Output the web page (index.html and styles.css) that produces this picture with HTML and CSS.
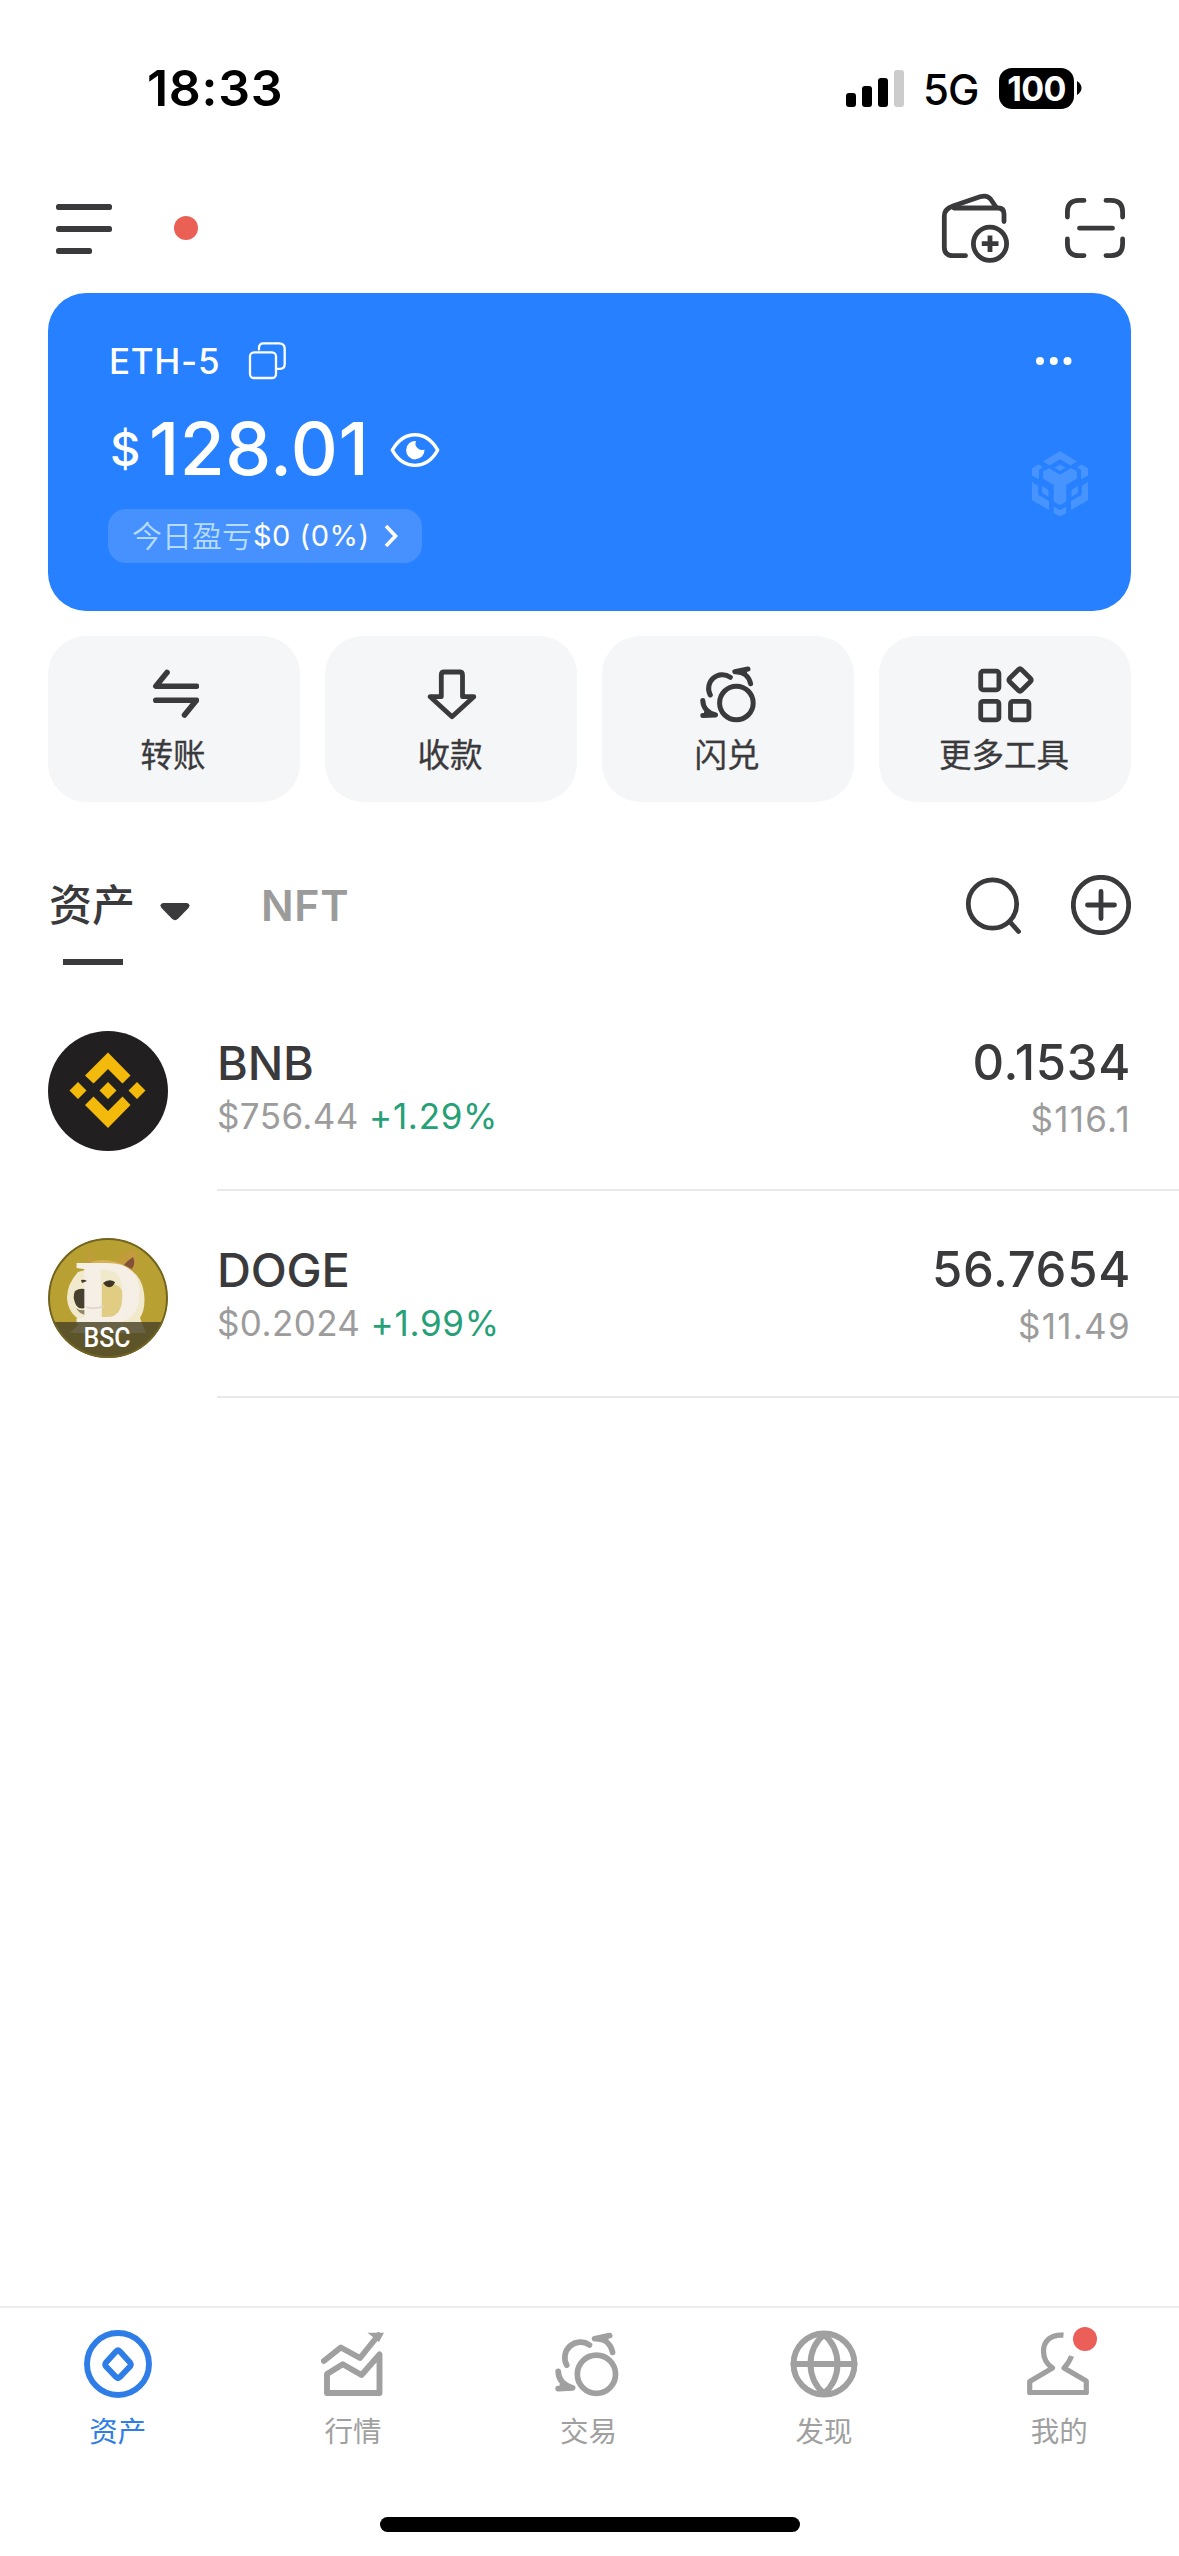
FILE: index.html
```html
<!DOCTYPE html>
<html lang="zh-CN">
<head>
<meta charset="utf-8">
<title>钱包</title>
<link rel="stylesheet" href="styles.css">
</head>
<body>
<svg class="sprite" width="0" height="0" aria-hidden="true">
  <symbol id="swap" viewBox="0 0 58 58">
    <g fill="none" stroke="currentColor" stroke-width="5" stroke-linecap="round" stroke-linejoin="round">
      <circle cx="36.4" cy="38" r="16.8"/>
      <path d="M30.3 12.3A13.7 13.7 0 0 0 10.3 30"/>
      <path d="M48 4 34.8 6.8C43 6.500 49 11 50.600 18.800"/>
      <path d="M2.800 35.500C3 42 7 47.500 15.500 50L2.800 50.600"/>
      <path d="M42 7.500 46 5.500V9zM5 47V49.500H9z" stroke-width="2"/>
    </g>
  </symbol>
</svg>
<div class="app">
  <header class="status">
    <span class="time">18:33</span>
    <div class="status-right">
      <svg class="signal" width="58" height="37" viewBox="0 0 58 37">
        <rect x="0" y="23" width="10" height="14" rx="3"/>
        <rect x="16" y="16" width="10" height="21" rx="3"/>
        <rect x="32" y="8" width="10" height="29" rx="3"/>
        <rect x="48" y="0" width="10" height="37" rx="3" fill="#ccc"/>
      </svg>
      <span class="net">5G</span>
      <span class="battery">100</span>
      <svg width="5" height="14" viewBox="0 0 5 14"><path d="M0 0Q4.500 3 4.500 7T0 14z"/></svg>
    </div>
  </header>

  <div class="topbar">
    <svg width="56" height="50" viewBox="0 0 56 50" class="menu">
      <rect width="56" height="6" rx="2.500"/><rect y="22" width="56" height="6" rx="2.500"/><rect y="44" width="36" height="6" rx="2.500"/>
    </svg>
    <span class="dot"></span>
    <svg class="line wallet" width="72" height="72" viewBox="0 0 72 72">
      <path d="M25.500 63.700H13Q4.300 63.700 4.300 55V24Q4.300 17 13 14L40 4.800Q47 2.600 50.500 7L56 15"/>
      <path d="M14 16H58Q64 16 64 22V29.500"/>
      <circle cx="50" cy="51.700" r="16.600"/>
      <path d="M50 43.500V60M41.800 51.700H58.500" stroke-linecap="butt"/>
    </svg>
    <svg class="line scan" width="60" height="60" viewBox="0 0 60 60">
      <path d="M2.400 19V14Q2.400 2.400 14 2.400H19M41 2.400H46Q57.600 2.400 57.600 14V19M57.600 41V46Q57.600 57.600 46 57.600H41M19 57.600H14Q2.400 57.600 2.400 46V41M14.500 30.200H47.500"/>
    </svg>
  </div>

  <section class="card">
    <div class="card-main">
      <div class="account">
        <span>ETH-5</span>
        <svg width="40" height="40" viewBox="0 0 40 40" fill="none" stroke="#fff" stroke-width="2.300" stroke-linecap="round">
          <rect x="2" y="11.300" width="26" height="25.700" rx="4"/>
          <path d="M11 8.500V7Q11 2.400 15.500 2.400H31Q36.700 2.400 36.700 8V23Q36.700 27.800 32 27.800H29.500"/>
        </svg>
      </div>
      <div class="balance">
        <span class="currency">$</span><span class="amount">128.01</span>
        <svg width="50" height="36" viewBox="0 0 50 36">
          <path d="M2.300 18.200C7 10 15 2.800 25 2.800S43 10 47.700 18.200C43 26.500 35 33.400 25 33.400S7 26.500 2.300 18.200Z" fill="none" stroke="#fff" stroke-width="3.400" stroke-linejoin="round"/>
          <path d="M26 9A9.200 9.200 0 1 0 34.500 17.500A6.500 6.500 0 0 1 26 9Z" fill="#fff"/>
        </svg>
      </div>
      <div class="pnl">
        <span class="pnl-label">今日盈亏</span><span class="pnl-value">$0 (0%)</span>
        <svg width="14" height="24" viewBox="0 0 14 24"><path d="M2 2 11.500 12 2 22" fill="none" stroke="#fff" stroke-width="3.600"/></svg>
      </div>
    </div>
    <div class="card-side">
      <svg class="more" width="36" height="8" viewBox="0 0 36 8" fill="#fff"><circle cx="4" cy="4" r="4"/><circle cx="17.800" cy="4" r="4"/><circle cx="31.500" cy="4" r="4"/></svg>
      <svg class="chain" width="58" height="67" viewBox="0 0 58 67" fill="#fff">
        <path d="M29 1 46 11.500 39.500 15.500 29 9.300 18.500 15.500 12 11.500Z"/>
        <path d="M29 14.500 34.500 17.700 29 21 23.500 17.700Z"/>
        <path d="M12 21.500 18 18 29 24.700 40 18 46 21.500V28.500L35.300 35V51.500L29 55.200 22.700 51.500V35L12 28.500Z"/>
        <path d="M1 18.300 7.300 14.500 12 17 8 20V29.300L1 25.500Z"/>
        <path d="M57 18.300 50.700 14.500 46 17 50 20V29.300L57 25.500Z"/>
        <path d="M1 32 7.300 36V45L18 51V60L1 50.300Z"/>
        <path d="M57 32 50.700 36V45L40 51V60L57 50.300Z"/>
        <path d="M11 36 17.500 40V46.700L11 42.700ZM47 36 40.500 40V46.700L47 42.700Z"/>
        <path d="M22.700 56.500 29 60 35.300 56.500V63L29 66.500 22.700 63Z"/>
      </svg>
    </div>
  </section>

  <section class="actions">
    <div class="action">
      <svg class="line bold" width="48" height="58" viewBox="-1 -4 48 58"><path d="M15 3.500 3.800 17.200H44.500M3.800 31.200H44.500L32.500 46"/></svg>
      <span>转账</span>
    </div>
    <div class="action">
      <svg class="line" width="50" height="58" viewBox="0 -3 50 58"><path d="M14.300 7Q14.300 4 17.300 4H32.500Q35.500 4 35.500 7V28.700H46.800L25 48.700 3.200 28.700H14.300Z"/></svg>
      <span>收款</span>
    </div>
    <div class="action">
      <svg width="58" height="58"><use href="#swap"/></svg>
      <span>闪兑</span>
    </div>
    <div class="action">
      <svg class="line" width="58" height="58" viewBox="0 0 58 58">
        <rect x="3.700" y="6.200" width="18.200" height="18.600" rx="2.500"/><rect x="3.700" y="36.300" width="18.200" height="18.600" rx="2.500"/><rect x="33.500" y="36.300" width="18.400" height="18.600" rx="2.500"/>
        <path d="M41.300 4.700Q43 3 44.700 4.700L53.300 13.300Q55 15 53.300 16.700L44.700 25.300Q43 27 41.300 25.300L32.700 16.700Q31 15 32.700 13.300Z"/>
      </svg>
      <span>更多工具</span>
    </div>
  </section>

  <div class="tabs">
    <div class="tab active"><span>资产</span></div>
    <svg class="caret" width="30" height="18" viewBox="0 0 30 18"><path d="M3 0H27Q31 1 28.500 5L18 15.800Q15 18.500 12 15.800L1.500 5Q-1 1 3 0Z"/></svg>
    <div class="tab nft">NFT</div>
    <svg class="line search" width="60" height="60" viewBox="0 0 60 60"><circle cx="29.500" cy="29" r="24.200"/><path d="M46.500 46.500 55.500 56.500"/></svg>
    <svg class="line add" width="60" height="60" viewBox="0 0 60 60"><circle cx="30" cy="30" r="27.700"/><path d="M30 16.500V43.500M16.500 30H43.500"/></svg>
  </div>

  <main class="assets">
    <div class="asset">
      <svg class="coin" width="120" height="120" viewBox="0 0 120 120">
        <circle cx="60" cy="60" r="60" fill="#221f20"/>
        <g fill="#f3ba0b"><path d="M60 21.500 82.500 44.500 74.500 52.500 60 38 45.500 52.500 37 44.500Z"/><path d="M60 97 37 74 45.500 65.500 60 80 74.500 65.500 82.500 74Z"/><path d="M60 51 68.500 59.500 60 68 51.500 59.500ZM30 51 38.500 59.500 30 68 21.500 59.500ZM89 51 97.500 59.500 89 68 80.500 59.500Z"/></g>
      </svg>
      <div class="asset-body">
        <div class="col">
          <span class="name">BNB</span>
          <span class="price">$756.44 <em>+1.29%</em></span>
        </div>
        <div class="col right">
          <span class="qty">0.1534</span>
          <span class="value">$116.1</span>
        </div>
      </div>
    </div>
    <div class="asset">
      <svg class="coin" width="120" height="120" viewBox="0 0 120 120">
        <clipPath id="disc"><circle cx="60" cy="60" r="60"/></clipPath>
        <g clip-path="url(#disc)">
          <rect width="120" height="120" fill="#b9a032"/>
          <path d="M39 30 40 10Q44 13 45 24L66 24Q74 15 86 11Q92 22 84 36Z" fill="#c29c3c"/>
          <path d="M76 27Q80 22 85 19Q88 25 84 31Z" fill="#84503a"/>
          <path d="M43 24Q58 19 76 27L70 34H42Z" fill="#d3b257"/>
          <path d="M30 34Q19 46 19 60Q20 76 34 83L22 95H98L92 80Q98 70 96 55Q94 40 84 33Q60 24 30 34Z" fill="#f0e9cb"/>
          <path d="M54 46H66Q77 50 75 63Q73 76 60 81H54Z" fill="#e0cc83"/>
          <path d="M27 53Q33 49 39 52V69Q32 73 28 67Q24 59 27 53Z" fill="#47402f"/>
          <path d="M28 70Q33 74 39 71V77Q32 77 28 70Z" fill="#8f8466"/>
          <text class="doge-letter" x="28" y="84" textLength="67" lengthAdjust="spacingAndGlyphs">D</text>
          <path d="M33 42Q36 41 39 43L34 45Z" fill="#443a27"/>
          <path d="M55 45Q61 40 67 44Q65 50 60 49Q57 48 55 45Z" fill="#3d3423"/>
          <path d="M38 69Q46 72 56 68" fill="none" stroke="#ddd4c8" stroke-width="1.500"/>
          <rect y="84" width="120" height="36" fill="#4a4328" fill-opacity=".82"/>
          <circle cx="60" cy="60" r="59" fill="none" stroke="#6f6325" stroke-width="2"/>
        </g>
        <text class="bsc" x="59" y="109" text-anchor="middle" textLength="47" lengthAdjust="spacingAndGlyphs">BSC</text>
      </svg>
      <div class="asset-body">
        <div class="col">
          <span class="name">DOGE</span>
          <span class="price">$0.2024 <em>+1.99%</em></span>
        </div>
        <div class="col right">
          <span class="qty">56.7654</span>
          <span class="value">$11.49</span>
        </div>
      </div>
    </div>
  </main>

  <nav class="nav">
    <div class="nav-item current">
      <svg class="ico" width="68" height="68" viewBox="0 0 68 68"><circle cx="34" cy="34" r="31"/><path d="M32 21.500Q34 19.500 36 21.500L46 32.500Q47.500 34.500 46 36.500L36 47Q34 49 32 47L22 36.500Q20.500 34.500 22 32.500Z"/></svg>
      <span>资产</span>
    </div>
    <div class="nav-item">
      <svg class="ico" width="64" height="68" viewBox="0 -1 64 68"><path d="M2.800 30 19.800 16.500 39 27 57.500 4"/><path d="M46.500 1.700H63L58 11Z" fill="currentColor" stroke="none"/><path d="M6 62V43L21.800 33.300 40.500 44 58.500 23.500V62Z"/></svg>
      <span>行情</span>
    </div>
    <div class="nav-item">
      <svg width="66" height="68" viewBox="0 0 66 68"><use href="#swap" width="66" height="66" y="1"/></svg>
      <span>交易</span>
    </div>
    <div class="nav-item">
      <svg class="ico" width="68" height="68" viewBox="0 0 68 68"><circle cx="34" cy="34" r="30.500"/><path d="M3.500 34H64.500M34 4.500C16 20 16 48 34 63.500M34 4.500C52 20 52 48 34 63.500"/></svg>
      <span>发现</span>
    </div>
    <div class="nav-item">
      <svg class="ico person" width="68" height="68" viewBox="0 5 68 68"><path d="M38.500 10.200C25 9 18.500 17 18.500 26Q18.500 37 27.500 43L4.700 56.500V67.500H61.300V56L39 43Q44 38 46.500 31"/></svg>
      <i class="badge"></i>
      <span>我的</span>
    </div>
  </nav>
  <div class="home"></div>
</div>
</body>
</html>
```

FILE: styles.css
```css
* { box-sizing: border-box; }
body {
  margin: 0;
  background: #fff;
  color: #3a3a3c;
  font-family: Inter, "Noto Sans CJK SC", sans-serif;
}
svg { display: block; flex: none; }
.sprite { position: absolute; }
.app {
  width: 1179px;
  height: 2556px;
  display: flex;
  flex-direction: column;
  overflow: hidden;
}
.line {
  fill: none;
  stroke: #3a3a3c;
  stroke-width: 4.8;
  stroke-linecap: round;
  stroke-linejoin: round;
}
.bold { stroke-width: 5.6; }

/* status bar */
.status {
  height: 176px;
  padding: 0 97px 0 147px;
  display: flex;
  align-items: center;
  justify-content: space-between;
  color: #000;
}
.time { font-size: 50px; font-weight: 600; letter-spacing: 0.7px; }
.status-right { display: flex; align-items: center; }
.net { margin: 3px 22px 0 19px; width: 54px; font-size: 42px; font-weight: 450; letter-spacing: -1px; }
.battery {
  width: 75px;
  height: 41px;
  margin-right: 3px;
  border-radius: 13px;
  background: #000;
  color: #fff;
  font: 700 34px/41px Inter, sans-serif;
  letter-spacing: -0.6px;
  text-align: center;
}

/* top bar */
.topbar {
  height: 103px;
  padding: 0 54px 0 56px;
  display: flex;
  align-items: center;
}
.menu { fill: #3a3a3c; margin-top: 3px; }
.dot { width: 24px; height: 24px; margin-left: 62px; border-radius: 50%; background: #ea6055; }
.wallet { margin-left: auto; }
.scan { margin-left: 53px; }

/* balance card */
.card {
  height: 318px;
  margin: 14px 48px 0;
  padding: 47px 42px 0 60px;
  display: flex;
  justify-content: space-between;
  border-radius: 38px;
  background: #2680ff;
  color: #fff;
}
.account { height: 41px; display: flex; align-items: center; font-size: 35px; font-weight: 450; letter-spacing: 0.7px; }
.account span { width: 140px; padding-left: 1px; }
.balance { height: 70px; margin-top: 33px; display: flex; align-items: center; line-height: 70px; }
.currency { width: 41px; padding-left: 2px; font-size: 47px; font-weight: 500; }
.amount { width: 220px; font-size: 73px; font-weight: 500; letter-spacing: 0.5px; }
.balance svg { margin: 2px 0 0 21px; }
.pnl {
  width: 314px;
  height: 54px;
  margin-top: 25px;
  padding-left: 24px;
  display: flex;
  align-items: center;
  border-radius: 18px;
  background: #4791ff;
  font-size: 30px;
  line-height: 54px;
}
.pnl-label { width: 121px; color: #b5dcff; font-weight: 350; }
.pnl-value { width: 131px; font-size: 29px; letter-spacing: 0.5px; }
.card-side { display: flex; flex-direction: column; align-items: flex-end; padding-top: 17px; }
.more { margin-right: 17px; }
.chain { margin-top: 85px; opacity: .15; }

/* quick actions */
.actions {
  height: 166px;
  margin: 25px 48px 0;
  display: grid;
  grid-template-columns: repeat(4, 1fr);
  gap: 25px;
}
.action {
  padding-top: 29px;
  display: flex;
  flex-direction: column;
  align-items: center;
  gap: 10px;
  border-radius: 38px;
  background: #f5f6f8;
  font-size: 32.5px;
  line-height: 46px;
  -webkit-text-stroke: 0.3px currentColor;
}
.action svg { margin-left: 1px; }
.action span { margin-right: 2px; }

/* tabs */
.tabs {
  height: 182px;
  padding: 73px 48px 0 49px;
  display: flex;
  align-items: flex-start;
}
.tab { font-size: 43px; font-weight: 500; line-height: 60px; white-space: nowrap; }
.active { width: 86px; }
.active::after { content: ""; display: block; width: 60px; height: 6px; margin: 24px 0 0 14px; background: #3a3a3c; }
.caret { margin: 28px 0 0 25px; fill: #3a3a3c; }
.nft { margin-left: 71px; font-weight: 600; letter-spacing: 0.6px; color: #9b9b9b; }
.search { margin-left: auto; }
.add { margin-left: 48px; }

/* asset list */
.asset { height: 207px; padding-left: 48px; display: flex; }
.coin { margin-top: 47px; }
.asset-body {
  flex: 1;
  margin-left: 49px;
  padding: 49px 48px 0 0;
  display: flex;
  justify-content: space-between;
  border-bottom: 2px solid #e9e9e9;
}
.col { display: flex; flex-direction: column; }
.right { align-items: flex-end; }
.name, .qty { height: 60px; line-height: 60px; font-weight: 500; }
.name { font-size: 47px; letter-spacing: -0.2px; }
.qty { font-size: 49px; letter-spacing: 0.7px; }
.price, .value { font-size: 35px; line-height: 47px; color: #9c9c9c; }
.price { letter-spacing: 0.4px; }
.price em { font-style: normal; letter-spacing: 0.7px; color: #25a077; }
.value { line-height: 53px; letter-spacing: 1.3px; }
.doge-letter { font: 700 89px "Liberation Serif", serif; fill: #f5efe6; stroke: #f5efe6; stroke-width: 2; }
.bsc { font: 500 28px Roboto, sans-serif; fill: #fff; }

/* bottom navigation */
.nav {
  height: 211px;
  margin-top: auto;
  padding: 22px 2px 0 0;
  display: grid;
  grid-template-columns: repeat(5, 1fr);
  border-top: 2px solid #ececec;
}
.nav-item {
  position: relative;
  display: flex;
  flex-direction: column;
  align-items: center;
  gap: 13px;
  color: #a0a0a0;
  font-size: 28.500px;
  line-height: 42px;
}
.current { color: #2f7de6; }
.ico { fill: none; stroke: currentColor; stroke-width: 5.9; stroke-linejoin: round; }
.ico path { stroke-linecap: round; }
.person path { stroke-linecap: butt; stroke-width: 5.2; }
.badge { position: absolute; top: -3px; left: 131px; width: 24px; height: 24px; border-radius: 50%; background: #ec5f59; }
.home { width: 420px; height: 15px; margin: 0 auto 24px; border-radius: 8px; background: #000; }
```
